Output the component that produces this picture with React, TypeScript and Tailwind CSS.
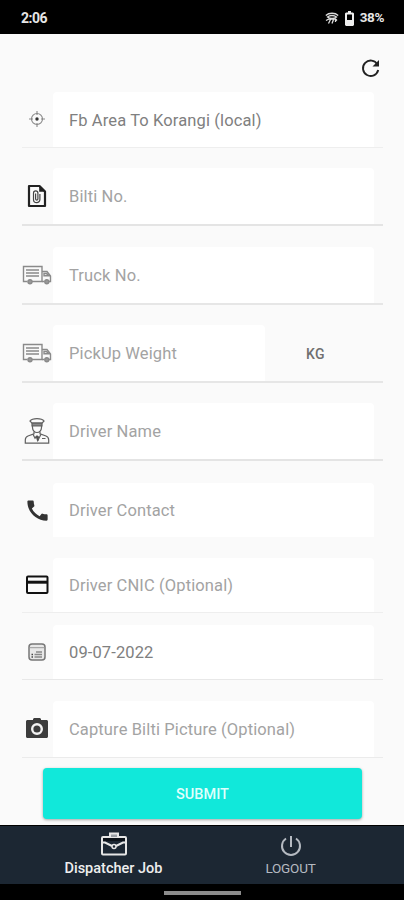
import React from 'react';
import clsx from 'clsx';
import { MdCall } from 'react-icons/md';

const LocationIcon = () => (
  <svg width="18" height="18" viewBox="0 0 18 18" fill="none" stroke="#888888" strokeWidth="1.1">
    <circle cx="9" cy="9" r="5.5" />
    <path d="M9 1v4M9 13v4M1 9h4M13 9h4" />
    <circle cx="9" cy="9" r="1.7" fill="#333333" stroke="none" />
  </svg>
);

const DocumentIcon = () => (
  <svg className="mt-px" width="20" height="24" viewBox="0 0 20 24" fill="none" stroke="#222222">
    <path d="M2 2h10.5L18 7.5V22H2z" strokeWidth="2.2" strokeLinejoin="round" />
    <path d="M12.2 2v5.8H18z" fill="#222222" stroke="none" />
    <path d="M6.5 9v6.5a3.2 3.2 0 0 0 6.4 0V10M6.5 9a2.2 2.2 0 0 1 4.4 0v6.2a1.2 1.2 0 0 1-2.3 0V9.6" stroke="#444444" strokeWidth="1.2" />
  </svg>
);

const TruckIcon = () => (
  <svg className="mt-0.5 shrink-0" width="30" height="20" viewBox="0 0 30 20" fill="none" stroke="#8a8a8a" strokeWidth="1.4">
    <path d="M5.500 16.500H1.500V1.500H20V16.500H10M4 5h13M4 8h13M4 11h13" />
    <path d="M20 6.500h5l3.500 4.500v5.500h-1.800M20 16.500h2.500M22 10.800V8.500h2.500l2 2.300z" />
    <circle cx="8" cy="16.700" r="2" fill="#999999" />
    <circle cx="24.800" cy="16.700" r="2" fill="#999999" />
  </svg>
);

const DriverIcon = () => (
  <svg className="mt-0.5" width="26" height="28" viewBox="0 0 26 28" fill="none" stroke="#606060" strokeWidth="1.2">
    <path d="M8 6.200L5.900 4C7.500 2 10 1.600 13 1.600s5.500.4 7.100 2.400L18 6.200z" />
    <path d="M8 6.200h10v2.600H8z" fill="#888888" />
    <path d="M8.500 8.500v2c0 3 2.200 5 4.500 5s4.500-2 4.500-5v-2" />
    <path d="M10 14.500v2.300l-6 2.200c-2 .8-2.700 2-2.700 4v3.200h23.400V23c0-2-.7-3.200-2.700-4l-6-2.200v-2.300" />
    <path d="M9 17.200l2 4 2-2.200 2 2.200 2-4M18 21.500h3.500" />
    <path d="M11.500 19h3l.5 4-1.500 2z" fill="#555555" stroke="none" />
  </svg>
);

const CardIcon = () => (
  <svg width="24" height="20" viewBox="0 0 24 20" fill="none" stroke="#111111">
    <rect x="2" y="1.500" width="20.500" height="16.500" rx="1" strokeWidth="2" />
    <path d="M2 7.200h20" strokeWidth="3" />
  </svg>
);

const CalendarIcon = () => (
  <svg width="18" height="18" viewBox="0 0 18 18" fill="none" stroke="#777777">
    <rect x="1" y="1" width="16" height="16" rx="3" fill="#e8e8e8" strokeWidth="1.5" />
    <path d="M2 4.700h14" stroke="#999999" />
    <path d="M8 9h6M6.500 11.500h7.500M6.500 14h7.500" stroke="#888888" strokeWidth="1.600" />
    <path d="M3.500 11.500h1.500M3.500 14h1.500" stroke="#444444" strokeWidth="1.500" />
  </svg>
);

const CameraIcon = () => (
  <svg width="24" height="24" viewBox="0 0 24 24">
    <path d="M2.500 4H8V3l1-1h6l1 1v1h5.500c.8 0 1.500.6 1.500 1.500v15c0 .8-.7 1.500-1.500 1.500h-19C1.700 22 1 21.400 1 20.500v-15C1 4.600 1.700 4 2.500 4z" fill="#3c3c3c" />
    <circle cx="12" cy="13" r="4.800" fill="#3c3c3c" stroke="#f2f2f2" strokeWidth="2.400" />
  </svg>
);

const BriefcaseIcon = () => (
  <svg width="28" height="26" viewBox="0 0 28 26" fill="none" stroke="#e6e6e6" strokeWidth="2">
    <rect x="2" y="6" width="24" height="17.500" rx="1" />
    <path d="M10 6V2.500h8V6" fill="#9a9fa5" />
    <path d="M3 8.500h22" stroke="#0c1219" strokeWidth="3" />
    <path d="M2 11.500h3l7 3.500M26 11.500h-3l-7 3.500" />
    <circle cx="14" cy="15.500" r="2" fill="#1c2733" strokeWidth="1.500" />
  </svg>
);

const PowerIcon = () => (
  <svg width="22" height="22" viewBox="0 0 22 22" fill="none" stroke="#b5bac1" strokeWidth="2">
    <path d="M11 1v11" />
    <path d="M6 3.500a9 9 0 1 0 10 0" />
  </svg>
);

interface Field {
  label: string;
  icon: React.ReactNode;
  filled?: boolean;
  unit?: string;
  rowClass: string;
  lineClass: string;
}

const fields: Field[] = [
  { label: 'Fb Area To Korangi (local)', icon: <LocationIcon />, filled: true, rowClass: 'h-[55px]', lineClass: 'h-px bg-[#eeeeee]' },
  { label: 'Bilti No.', icon: <DocumentIcon />, rowClass: 'mt-5 h-[56px]', lineClass: 'h-[2px] bg-[#e4e4e4]' },
  { label: 'Truck No.', icon: <TruckIcon />, rowClass: 'mt-[21px] h-[56px]', lineClass: 'h-[2px] bg-[#e6e6e6]' },
  { label: 'PickUp Weight', icon: <TruckIcon />, unit: 'KG', rowClass: 'mt-5 h-[56px]', lineClass: 'h-[2px] bg-[#e6e6e6]' },
  { label: 'Driver Name', icon: <DriverIcon />, rowClass: 'mt-5 h-[56px]', lineClass: 'h-[2px] bg-[#e4e4e4]' },
  { label: 'Driver Contact', icon: <MdCall size={27} color="#333333" />, rowClass: 'mt-[22px] h-[54px]', lineClass: 'h-px' },
  { label: 'Driver CNIC (Optional)', icon: <CardIcon />, rowClass: 'mt-[19px] h-[55px] pt-px', lineClass: 'h-px bg-[#eeeeee]' },
  { label: '09-07-2022', icon: <CalendarIcon />, filled: true, rowClass: 'mt-[11px] h-[55px] pt-px', lineClass: 'h-px bg-[#e8e8e8]' },
  { label: 'Capture Bilti Picture (Optional)', icon: <CameraIcon />, rowClass: 'mt-5 h-[57px] pt-px', lineClass: 'h-px bg-[#ebebeb]' },
];

const FieldRow: React.FC<{ field: Field }> = ({ field }) => (
  <>
    <div className={clsx('flex', field.rowClass)}>
      <div className="mr-px flex h-[54px] w-[30px] shrink-0 items-center justify-center">{field.icon}</div>
      <div
        className={clsx(
          'flex items-center rounded-t bg-white pl-4 pt-[3px] text-[16.5px] font-normal tracking-[0.12px]',
          field.unit ? 'w-[212px]' : 'w-[321px]',
          field.filled ? 'text-[#808080]' : 'text-[#a3a3a3]'
        )}
      >
        {field.label}
      </div>
      {field.unit && (
        <div className="flex flex-1 items-center pl-[41px] pt-0.5 text-sm font-medium tracking-wide text-[#707070]">{field.unit}</div>
      )}
    </div>
    <div className={field.lineClass}></div>
  </>
);

export default function App() {
  return (
    <div className="flex h-[900px] w-[404px] flex-col overflow-hidden bg-[#fafafa] font-['Roboto',sans-serif]">
      {/* Status bar */}
      <div className="flex h-[34px] shrink-0 items-center justify-between bg-black pl-[21px] pr-5 pt-0.5 text-sm font-bold text-[#e6e6e6]">
        <span className="tracking-[-0.5px]">2:06</span>
        <div className="flex items-center gap-[6px]">
          <svg width="14" height="13" viewBox="0 0 14 13" fill="none" stroke="#dddddd" strokeWidth="1.3">
            <path d="M.8 3.500C4 .5 10 .5 13.200 3.500" />
            <path d="M2.500 5C5 3 9 3 11.500 5 9 7 5 7 2.500 5z" />
            <path d="M1 8.500L4 7h6.500l1.500 1.500M5.500 7.500L3.500 11.500M8.500 7.500L7 11.500M10.500 7.500V10" />
          </svg>
          <svg width="9" height="15" viewBox="0 0 9 15">
            <path d="M3 0h3v1.500h2l1 1V14l-1 1H1l-1-1V2.500l1-1h2z" fill="#eeeeee" />
            <path d="M2 3.500h5V9H2z" fill="#000000" />
          </svg>
          <span className="text-[13.5px] tracking-[-0.4px]">38%</span>
        </div>
      </div>

      {/* Form */}
      <div className="flex h-[791px] shrink-0 flex-col pl-[22px] pr-[21px]">
        <div className="flex h-[58px] shrink-0 justify-end pr-px pt-[23px]">
          <svg width="23" height="23" viewBox="0 0 23 23" fill="none" stroke="#222222" strokeWidth="1.9">
            <path d="M18.400 7.500A7.700 7.700 0 1 0 19.200 13" />
            <path d="M20 3v6.500h-6.500z" fill="#222222" stroke="none" />
          </svg>
        </div>
        {fields.map((field) => (
          <FieldRow key={field.label} field={field} />
        ))}
        <button className="ml-[21px] mt-[10px] h-[51px] w-[319px] shrink-0 rounded bg-[#11e8da] pt-0.5 text-[14.5px] font-medium text-[#dffffc] shadow-[0_1px_3px_rgba(0,0,0,0.35)]">
          SUBMIT
        </button>
      </div>

      {/* Bottom tabs */}
      <div className="flex h-[59px] shrink-0 border-t border-black bg-[#1c2733] pl-[25px] pr-[25px]">
        <div className="flex flex-1 flex-col items-center pt-[5px] text-[14.5px] text-[#eeeeee]">
          <BriefcaseIcon />
          <span className="mt-0.5 leading-5 font-medium">Dispatcher Job</span>
        </div>
        <div className="flex flex-1 flex-col items-center pt-[9px] text-[13.5px] text-[#b5bac1]">
          <PowerIcon />
          <span className="mt-px leading-5 tracking-[-0.2px]">LOGOUT</span>
        </div>
      </div>

      <div className="flex h-4 shrink-0 justify-center bg-black pt-[7px]">
        <div className="h-1 w-[77px] bg-[#8c8c8c]"></div>
      </div>
    </div>
  );
}
